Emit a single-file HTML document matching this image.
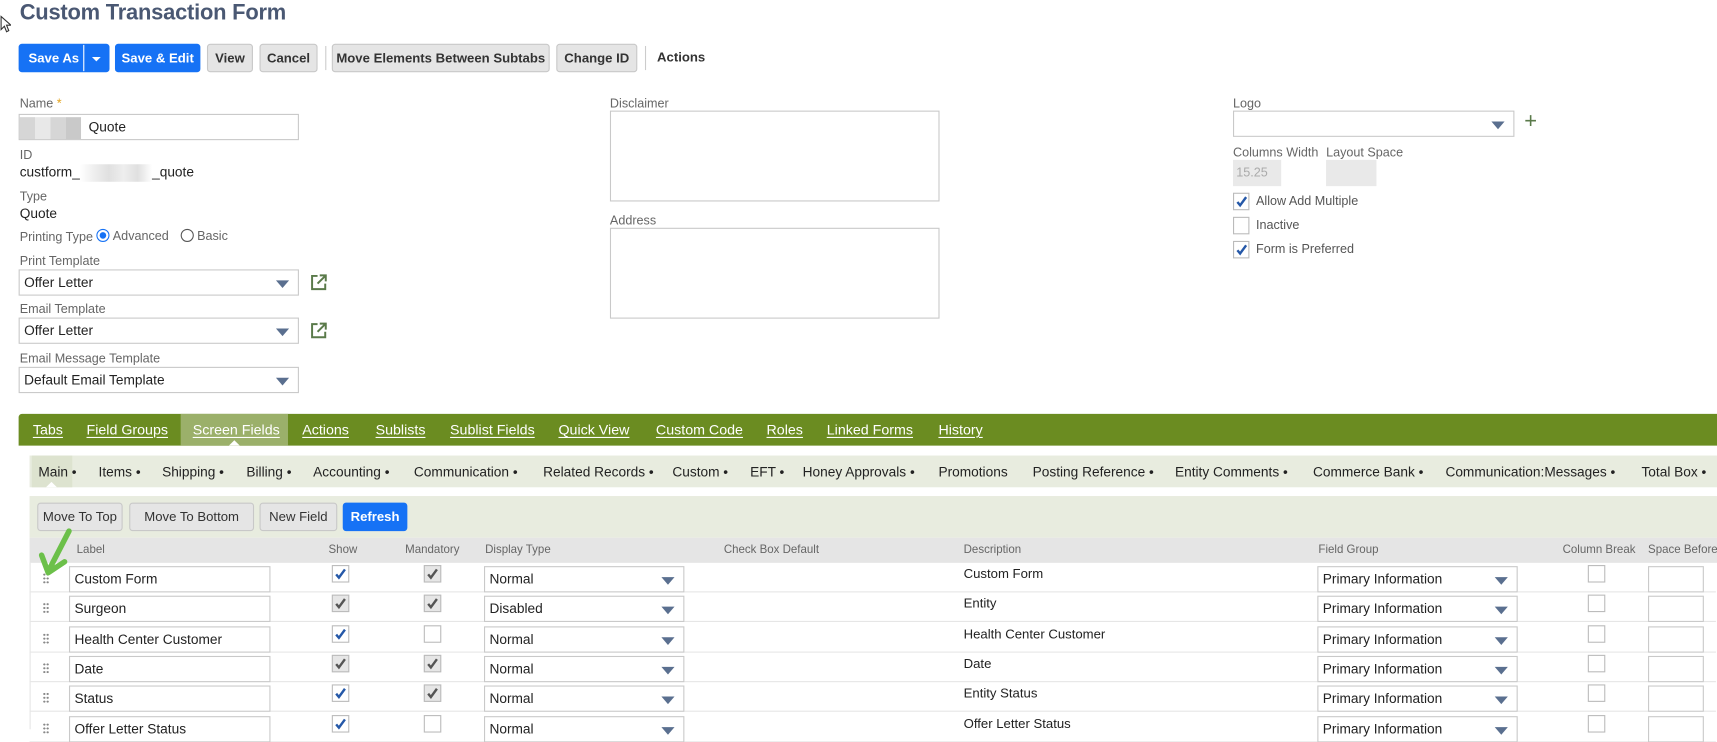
<!DOCTYPE html>
<html><head><meta charset="utf-8"><style>
*{box-sizing:border-box;margin:0;padding:0}
body{width:1717px;height:729px;background:#fff;font-family:"Liberation Sans",sans-serif;color:#222;position:relative;overflow:hidden;font-size:13px}
#w{position:absolute;left:0;top:0;width:1568px;height:666px;transform:scale(1.09503);transform-origin:0 0}
.a{position:absolute;white-space:nowrap}
.lbl{position:absolute;font-size:11.5px;color:#666;white-space:nowrap}
.val{position:absolute;font-size:12.5px;color:#222;white-space:nowrap}
.btn{position:absolute;height:26px;border:1px solid #c8c8c8;border-radius:3px;background:#e5e5e5;color:#333;font-size:12px;font-weight:bold;line-height:24px;text-align:center;white-space:nowrap}
.blue{background:#1672f5;border-color:#1672f5;color:#fff}
.inp{position:absolute;border:1px solid #c9c9c9;background:#fff;height:24px;font-size:12.5px;line-height:22px;padding-left:4px;white-space:nowrap}
.dd::after{content:"";position:absolute;right:8px;top:9px;border-left:6px solid transparent;border-right:6px solid transparent;border-top:7px solid #5a6f8f}
.cb{position:absolute;width:16px;height:16px;border:1px solid #bbb;background:#fff}
.cb.g{background:#e6e6e6}
.cb svg{position:absolute;left:1px;top:1px}
.tab{position:absolute;top:378px;height:29px;line-height:30px;color:#fff;font-size:13px;text-decoration:underline;text-decoration-thickness:1px;text-underline-offset:2px;white-space:nowrap}
.st{position:absolute;top:416px;height:29px;line-height:30px;color:#222;font-size:12.5px;white-space:nowrap}
.hd{position:absolute;top:491px;height:23px;line-height:23px;font-size:10.5px;color:#666;white-space:nowrap}
.row{position:absolute;left:27px;width:1540px;height:27px;border-bottom:1px solid #e6e6e6}
.grip{position:absolute;left:39px;width:6px;height:10px;background-image:radial-gradient(circle,#888 0.9px,transparent 1.1px);background-size:3px 3.5px}
</style></head><body><div id="w">
<div class="a" style="left:18px;top:1px;font-size:20px;font-weight:bold;color:#4a5873;letter-spacing:-0.2px">Custom Transaction Form</div>

<div class="btn blue" style="left:17px;top:40px;width:83px;text-align:left;padding-left:8px">Save As<span style="position:absolute;left:58px;top:0;height:24px;border-left:1px solid #fff"></span><span style="position:absolute;left:66px;top:11px;border-left:4px solid transparent;border-right:4px solid transparent;border-top:4px solid #fff"></span></div>
<div class="btn blue" style="left:105px;top:40px;width:78px">Save &amp; Edit</div>
<div class="btn" style="left:189px;top:40px;width:42px">View</div>
<div class="btn" style="left:237px;top:40px;width:53px">Cancel</div>
<div class="a" style="left:297px;top:42px;height:22px;border-left:1px solid #ccc"></div>
<div class="btn" style="left:303px;top:40px;width:199px">Move Elements Between Subtabs</div>
<div class="btn" style="left:508px;top:40px;width:74px">Change ID</div>
<div class="a" style="left:589px;top:42px;height:22px;border-left:1px solid #ccc"></div>
<div class="a" style="left:600px;top:45px;font-size:12px;font-weight:bold;color:#333">Actions</div>

<div class="lbl" style="left:18px;top:89px">Name <span style="color:#e3a21a">*</span></div>
<div class="inp" style="left:17px;top:104px;width:256px;padding-left:0"><span style="display:inline-block;width:14px;height:20px;background:#d6d6d6;vertical-align:middle"></span><span style="display:inline-block;width:14px;height:20px;background:#e8e8e8;vertical-align:middle"></span><span style="display:inline-block;width:14px;height:20px;background:#d6d6d6;vertical-align:middle"></span><span style="display:inline-block;width:14px;height:20px;background:#c9c9c9;vertical-align:middle"></span> &nbsp;Quote</div>
<div class="lbl" style="left:18px;top:136px">ID</div>
<div class="val" style="left:18px;top:150px">custform_<span style="display:inline-block;width:66px;height:16px;background:linear-gradient(90deg,#fff,#eee 20%,#e0e0e0 40%,#eee 60%,#e0e0e0 80%,#fff);vertical-align:middle"></span>_quote</div>
<div class="lbl" style="left:18px;top:174px">Type</div>
<div class="val" style="left:18px;top:188px">Quote</div>
<div class="lbl" style="left:18px;top:211px">Printing Type</div>
<div class="a" style="left:88px;top:209px;width:12px;height:12px;border:1px solid #1672f5;border-radius:50%"><div style="margin:2px;width:6px;height:6px;border-radius:50%;background:#1672f5"></div></div>
<div class="lbl" style="left:103px;top:210px">Advanced</div>
<div class="a" style="left:165px;top:209px;width:12px;height:12px;border:1px solid #555;border-radius:50%"></div>
<div class="lbl" style="left:180px;top:210px">Basic</div>
<div class="lbl" style="left:18px;top:233px">Print Template</div>
<div class="inp dd" style="left:17px;top:246px;width:256px">Offer Letter</div>
<svg class="a" style="left:283px;top:250px" width="16" height="16" viewBox="0 0 16 16"><path d="M7 2H2v12h12V9" fill="none" stroke="#5a7a4a" stroke-width="1.8"/><path d="M9 1.5h5.5V7M14.5 1.5 7 9" fill="none" stroke="#5a7a4a" stroke-width="1.8"/></svg>
<div class="lbl" style="left:18px;top:277px">Email Template</div>
<div class="inp dd" style="left:17px;top:290px;width:256px">Offer Letter</div>
<svg class="a" style="left:283px;top:294px" width="16" height="16" viewBox="0 0 16 16"><path d="M7 2H2v12h12V9" fill="none" stroke="#5a7a4a" stroke-width="1.8"/><path d="M9 1.5h5.5V7M14.5 1.5 7 9" fill="none" stroke="#5a7a4a" stroke-width="1.8"/></svg>
<div class="lbl" style="left:18px;top:322px">Email Message Template</div>
<div class="inp dd" style="left:17px;top:335px;width:256px">Default Email Template</div>

<div class="lbl" style="left:557px;top:89px">Disclaimer</div>
<div class="a" style="left:557px;top:101px;width:301px;height:83px;border:1px solid #c9c9c9"></div>
<div class="lbl" style="left:557px;top:196px">Address</div>
<div class="a" style="left:557px;top:208px;width:301px;height:83px;border:1px solid #c9c9c9"></div>

<div class="lbl" style="left:1126px;top:89px">Logo</div>
<div class="inp dd" style="left:1126px;top:101px;width:257px"></div>
<div class="a" style="left:1392px;top:99px;font-size:20px;color:#5a7a4a;line-height:24px">+</div>
<div class="lbl" style="left:1126px;top:134px">Columns Width</div>
<div class="lbl" style="left:1211px;top:134px">Layout Space</div>
<div class="a" style="left:1126px;top:146px;width:44px;height:24px;background:#e9e9e9;color:#aaa;font-size:11.5px;line-height:24px;padding-left:3px">15.25</div>
<div class="a" style="left:1211px;top:146px;width:46px;height:24px;background:#e9e9e9"></div>
<div class="cb" style="left:1126px;top:176px;width:15px;height:16px"><svg width="12" height="12" viewBox="0 0 12 12"><path d="M2 6.5l2.5 3L10 2" fill="none" stroke="#2558a8" stroke-width="2.2"/></svg></div>
<div class="lbl" style="left:1147px;top:178px;color:#555">Allow Add Multiple</div>
<div class="cb" style="left:1126px;top:198px;width:15px;height:16px"></div>
<div class="lbl" style="left:1147px;top:200px;color:#555">Inactive</div>
<div class="cb" style="left:1126px;top:220px;width:15px;height:16px"><svg width="12" height="12" viewBox="0 0 12 12"><path d="M2 6.5l2.5 3L10 2" fill="none" stroke="#2558a8" stroke-width="2.2"/></svg></div>
<div class="lbl" style="left:1147px;top:222px;color:#555">Form is Preferred</div>

<div class="a" style="left:17px;top:378px;width:1551px;height:29px;background:#6b8c21;border-radius:3px 0 0 0"></div>
<div class="a" style="left:165px;top:378px;width:98px;height:29px;background:#9bb06a"></div>
<div class="a" style="left:209px;top:402px;border-left:5px solid transparent;border-right:5px solid transparent;border-bottom:5px solid #fff"></div>
<div class="tab" style="left:30px">Tabs</div>
<div class="tab" style="left:79px">Field Groups</div>
<div class="tab" style="left:176px">Screen Fields</div>
<div class="tab" style="left:276px">Actions</div>
<div class="tab" style="left:343px">Sublists</div>
<div class="tab" style="left:411px">Sublist Fields</div>
<div class="tab" style="left:510px">Quick View</div>
<div class="tab" style="left:599px">Custom Code</div>
<div class="tab" style="left:700px">Roles</div>
<div class="tab" style="left:755px">Linked Forms</div>
<div class="tab" style="left:857px">History</div>

<div class="a" style="left:27px;top:416px;width:1541px;height:29px;background:#e8ecdf"></div>
<div class="a" style="left:29px;top:416px;width:37px;height:29px;background:#dde3cf"></div>
<div class="a" style="left:42px;top:440px;border-left:5px solid transparent;border-right:5px solid transparent;border-bottom:5px solid #fff"></div>
<div class="st" style="left:35px">Main •</div>
<div class="st" style="left:90px">Items •</div>
<div class="st" style="left:148px">Shipping •</div>
<div class="st" style="left:225px">Billing •</div>
<div class="st" style="left:286px">Accounting •</div>
<div class="st" style="left:378px">Communication •</div>
<div class="st" style="left:496px">Related Records •</div>
<div class="st" style="left:614px">Custom •</div>
<div class="st" style="left:685px">EFT •</div>
<div class="st" style="left:733px">Honey Approvals •</div>
<div class="st" style="left:857px">Promotions</div>
<div class="st" style="left:943px">Posting Reference •</div>
<div class="st" style="left:1073px">Entity Comments •</div>
<div class="st" style="left:1199px">Commerce Bank •</div>
<div class="st" style="left:1320px">Communication:Messages •</div>
<div class="st" style="left:1499px">Total Box •</div>

<div class="a" style="left:27px;top:453px;width:1541px;height:38px;background:#e8ecdf"></div>
<div class="btn" style="left:34px;top:459px;width:78px;font-weight:normal">Move To Top</div>
<div class="btn" style="left:118px;top:459px;width:114px;font-weight:normal">Move To Bottom</div>
<div class="btn" style="left:237px;top:459px;width:71px;font-weight:normal">New Field</div>
<div class="btn blue" style="left:313px;top:459px;width:59px">Refresh</div>

<div class="a" style="left:27px;top:491px;width:1541px;height:23px;background:#e5e5e5"></div>
<div class="hd" style="left:70px">Label</div>
<div class="hd" style="left:300px">Show</div>
<div class="hd" style="left:370px">Mandatory</div>
<div class="hd" style="left:443px">Display Type</div>
<div class="hd" style="left:661px">Check Box Default</div>
<div class="hd" style="left:880px">Description</div>
<div class="hd" style="left:1204px">Field Group</div>
<div class="hd" style="left:1427px">Column Break</div>
<div class="hd" style="left:1505px">Space Before</div>
<div class="a" style="left:27px;top:514px;height:152px;border-left:1px solid #e6e6e6"></div>

<div id="rows"></div>
<svg class="a" style="left:34px;top:482px" width="40" height="46" viewBox="0 0 40 46"><path d="M29 3 L11 38" stroke="#6cc04a" stroke-width="5" stroke-linecap="round" fill="none"/><path d="M4 25 L10 41 L25 31" stroke="#6cc04a" stroke-width="5" stroke-linecap="round" stroke-linejoin="round" fill="none"/></svg>
<svg class="a" style="left:0;top:14px" width="10" height="16" viewBox="0 0 10 16"><path d="M1 1v12l3-3 2 5 2-1-2-5h4z" fill="#fff" stroke="#333" stroke-width="1"/></svg>
</div>
<script>
var rows=[["Custom Form",1,2,"Normal","Custom Form"],["Surgeon",2,2,"Disabled","Entity"],["Health Center Customer",1,0,"Normal","Health Center Customer"],["Date",2,2,"Normal","Date"],["Status",1,2,"Normal","Entity Status"],["Offer Letter Status",1,0,"Normal","Offer Letter Status"]];
var tick1='<svg width="12" height="12" viewBox="0 0 12 12"><path d="M2 6.5l2.5 3L10 2" fill="none" stroke="#2558a8" stroke-width="2.2"/></svg>';
var tick2='<svg width="12" height="12" viewBox="0 0 12 12"><path d="M2 6.5l2.5 3L10 2" fill="none" stroke="#555" stroke-width="2.2"/></svg>';
var h='';
rows.forEach(function(r,i){var y=514+i*27.3;
h+='<div class="row" style="top:'+y+'px"></div>';
h+='<div class="grip" style="top:'+(y+9)+'px"></div>';
h+='<div class="inp" style="left:63px;top:'+(y+3)+'px;width:184px">'+r[0]+'</div>';
function cb(x,v){return '<div class="cb'+(v==2?' g':'')+'" style="left:'+x+'px;top:'+(y+2)+'px">'+(v==1?tick1:v==2?tick2:'')+'</div>';}
h+=cb(303,r[1])+cb(387,r[2]);
h+='<div class="inp dd" style="left:442px;top:'+(y+3)+'px;width:183px">'+r[3]+'</div>';
h+='<div class="val" style="left:880px;top:'+(y+3)+'px;font-size:12px">'+r[4]+'</div>';
h+='<div class="inp dd" style="left:1203px;top:'+(y+3)+'px;width:183px">Primary Information</div>';
h+='<div class="cb" style="left:1450px;top:'+(y+2)+'px"></div>';
h+='<div class="inp" style="left:1505px;top:'+(y+3)+'px;width:51px"></div>';
});
document.getElementById('rows').innerHTML=h;
</script>
</body></html>
